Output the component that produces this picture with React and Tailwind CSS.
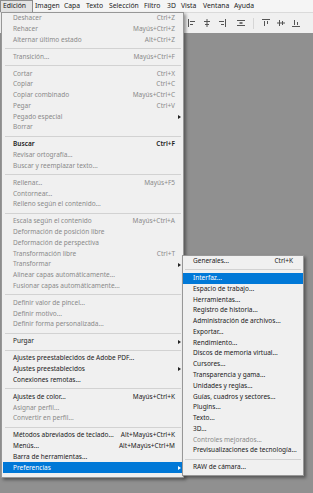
import React from "react";

const menuBar = [
  { t: "Edición", w: "w-[33px]", open: true },
  { t: "Imagen", w: "w-[29px]" },
  { t: "Capa", w: "w-[22px]" },
  { t: "Texto", w: "w-[23px]" },
  { t: "Selección", w: "w-[35px]" },
  { t: "Filtro", w: "w-[23px]" },
  { t: "3D", w: "w-[14px]" },
  { t: "Vista", w: "w-[22px]" },
  { t: "Ventana", w: "w-[31px]" },
  { t: "Ayuda", w: "w-[30px]" },
];

const editMenu = [
  { t: "Deshacer", k: "Ctrl+Z", off: true },
  { t: "Rehacer", k: "Mayús+Ctrl+Z", off: true },
  { t: "Alternar último estado", k: "Alt+Ctrl+Z", off: true },
  "sep",
  { t: "Transición...", k: "Mayús+Ctrl+F", off: true },
  "sep",
  { t: "Cortar", k: "Ctrl+X", off: true },
  { t: "Copiar", k: "Ctrl+C", off: true },
  { t: "Copiar combinado", k: "Mayús+Ctrl+C", off: true },
  { t: "Pegar", k: "Ctrl+V", off: true },
  { t: "Pegado especial", sub: true, off: true },
  { t: "Borrar", off: true },
  "sep",
  { t: "Buscar", k: "Ctrl+F", bold: true },
  { t: "Revisar ortografía...", off: true },
  { t: "Buscar y reemplazar texto...", off: true },
  "sep",
  { t: "Rellenar...", k: "Mayús+F5", off: true },
  { t: "Contornear...", off: true },
  { t: "Relleno según el contenido...", off: true },
  "sep",
  { t: "Escala según el contenido", k: "Mayús+Ctrl+A", off: true },
  { t: "Deformación de posición libre", off: true },
  { t: "Deformación de perspectiva", off: true },
  { t: "Transformación libre", k: "Ctrl+T", off: true },
  { t: "Transformar", sub: true, off: true },
  { t: "Alinear capas automáticamente...", off: true },
  { t: "Fusionar capas automáticamente...", off: true },
  "sep",
  { t: "Definir valor de pincel...", off: true },
  { t: "Definir motivo...", off: true },
  { t: "Definir forma personalizada...", off: true },
  "sep",
  { t: "Purgar", sub: true },
  "sep",
  { t: "Ajustes preestablecidos de Adobe PDF..." },
  { t: "Ajustes preestablecidos", sub: true },
  { t: "Conexiones remotas..." },
  "sep",
  { t: "Ajustes de color...", k: "Mayús+Ctrl+K" },
  { t: "Asignar perfil...", off: true },
  { t: "Convertir en perfil...", off: true },
  "sep",
  { t: "Métodos abreviados de teclado...", k: "Alt+Mayús+Ctrl+K" },
  { t: "Menús...", k: "Alt+Mayús+Ctrl+M" },
  { t: "Barra de herramientas..." },
  { t: "Preferencias", sub: true, active: true },
];

const prefMenu = [
  { t: "Generales...", k: "Ctrl+K" },
  "sep",
  { t: "Interfaz...", active: true },
  { t: "Espacio de trabajo..." },
  { t: "Herramientas..." },
  { t: "Registro de historia..." },
  { t: "Administración de archivos..." },
  { t: "Exportar..." },
  { t: "Rendimiento..." },
  { t: "Discos de memoria virtual..." },
  { t: "Cursores..." },
  { t: "Transparencia y gama..." },
  { t: "Unidades y reglas..." },
  { t: "Guías, cuadros y sectores..." },
  { t: "Plugins..." },
  { t: "Texto..." },
  { t: "3D..." },
  { t: "Controles mejorados...", off: true },
  { t: "Previsualizaciones de tecnología..." },
  "sep",
  { t: "RAW de cámara..." },
];

function MenuRows({ items, arrowSlot }) {
  return items.map((it, i) => {
    if (it === "sep")
      return (
        <div key={i} className="h-[6.2px] flex items-center px-[2px]">
          <div className="h-px w-full bg-[#d2d2d2]" />
        </div>
      );
    const color = it.active
      ? "bg-[#0078d7] text-white"
      : it.off
      ? "text-[#8a8a8a]"
      : "text-[#1a1a1a]";
    return (
      <div
        key={i}
        className={`h-[10.78px] flex items-center pl-[10px] whitespace-nowrap ${color} ${
          it.bold ? "font-semibold" : ""
        } ${arrowSlot ? "" : "pr-[10px]"}`}
      >
        <span className="flex-1">{it.t}</span>
        {it.k && <span>{it.k}</span>}
        {arrowSlot && (
          <span className="w-[8px] flex justify-center">
            {it.sub && (
              <span
                className={`w-0 h-0 border-y-[2.5px] border-y-transparent border-l-[3px] ${
                  it.active ? "border-l-white" : "border-l-[#222]"
                }`}
              />
            )}
          </span>
        )}
      </div>
    );
  });
}

function AlignIcon({ kind }) {
  const s = { stroke: "#555", strokeWidth: 1, fill: "none" };
  return (
    <svg width="8" height="8" viewBox="0 0 8 8">
      {kind === "left" && (
        <>
          <path d="M0.5 0v8" {...s} />
          <path d="M2 2.5h5M2 5.5h3" {...s} />
        </>
      )}
      {kind === "hcenter" && (
        <>
          <path d="M4 0v8" {...s} />
          <path d="M1 2.5h6M2 5.5h4" {...s} />
        </>
      )}
      {kind === "right" && (
        <>
          <path d="M7.5 0v8" {...s} />
          <path d="M1 2.5h5M3 5.5h3" {...s} />
        </>
      )}
      {kind === "dist" && (
        <>
          <path d="M0 1.5h8M0 6.5h8" {...s} />
          <path d="M2.5 4h3" stroke="#555" strokeWidth="1.6" />
        </>
      )}
      {kind === "top" && (
        <>
          <path d="M0 0.5h8" {...s} />
          <path d="M2.5 2v5M5.5 2v3" {...s} />
        </>
      )}
      {kind === "vcenter" && (
        <>
          <path d="M0 4h8" {...s} />
          <path d="M2.5 1v6M5.5 2v4" {...s} />
        </>
      )}
      {kind === "bottom" && (
        <>
          <path d="M0 7.5h8" {...s} />
          <path d="M2.5 1v5M5.5 3v3" {...s} />
        </>
      )}
    </svg>
  );
}

export default function App() {
  return (
    <div
      className="relative w-[313px] h-[493px] overflow-hidden flex flex-col bg-[#8f8f8f]"
      style={{ fontFamily: '"Noto Sans", "Open Sans", sans-serif' }}
    >
      {/* menu bar */}
      <div className="h-[12px] flex items-stretch bg-[#f5f5f5] text-[6.8px] text-[#1a1a1a] leading-none">
        {menuBar.map((m) => (
          <div
            key={m.t}
            className={`${m.w} flex items-center pl-[2px] ${
              m.open ? "bg-[#e3e3e3] border border-[#8c8c8c] border-b-0" : ""
            }`}
          >
            {m.t}
          </div>
        ))}
      </div>

      {/* options bar */}
      <div className="h-[21px] bg-[#f0f0f0] border-t border-[#dadada] flex items-center pl-[188px]">
        <div className="flex items-center gap-[7px]">
          <AlignIcon kind="left" />
          <AlignIcon kind="hcenter" />
          <AlignIcon kind="right" />
        </div>
        <div className="ml-[11px]">
          <AlignIcon kind="dist" />
        </div>
        <div className="ml-[8px] w-px h-[11px] bg-[#d6d6d6]" />
        <div className="ml-[8px] flex items-center gap-[7px]">
          <AlignIcon kind="top" />
          <AlignIcon kind="vcenter" />
          <AlignIcon kind="bottom" />
        </div>
      </div>

      {/* canvas area */}
      <div className="flex-1 bg-[#909090]" />

      {/* Edición menu */}
      <div className="absolute left-[1px] top-[12px] w-[183px] bg-[#f0f0f0] border border-[#979797] pt-0 pb-[4px] pl-px text-[6.5px] leading-none shadow-[2px_2px_3px_rgba(0,0,0,0.4)]">
        <MenuRows items={editMenu} arrowSlot />
      </div>

      {/* Preferencias submenu */}
      <div className="absolute left-[182px] top-[255px] w-[122px] bg-[#f0f0f0] border border-[#979797] pb-[2px] text-[6.5px] leading-none shadow-[2px_2px_3px_rgba(0,0,0,0.4)]">
        <MenuRows items={prefMenu} />
      </div>
    </div>
  );
}
